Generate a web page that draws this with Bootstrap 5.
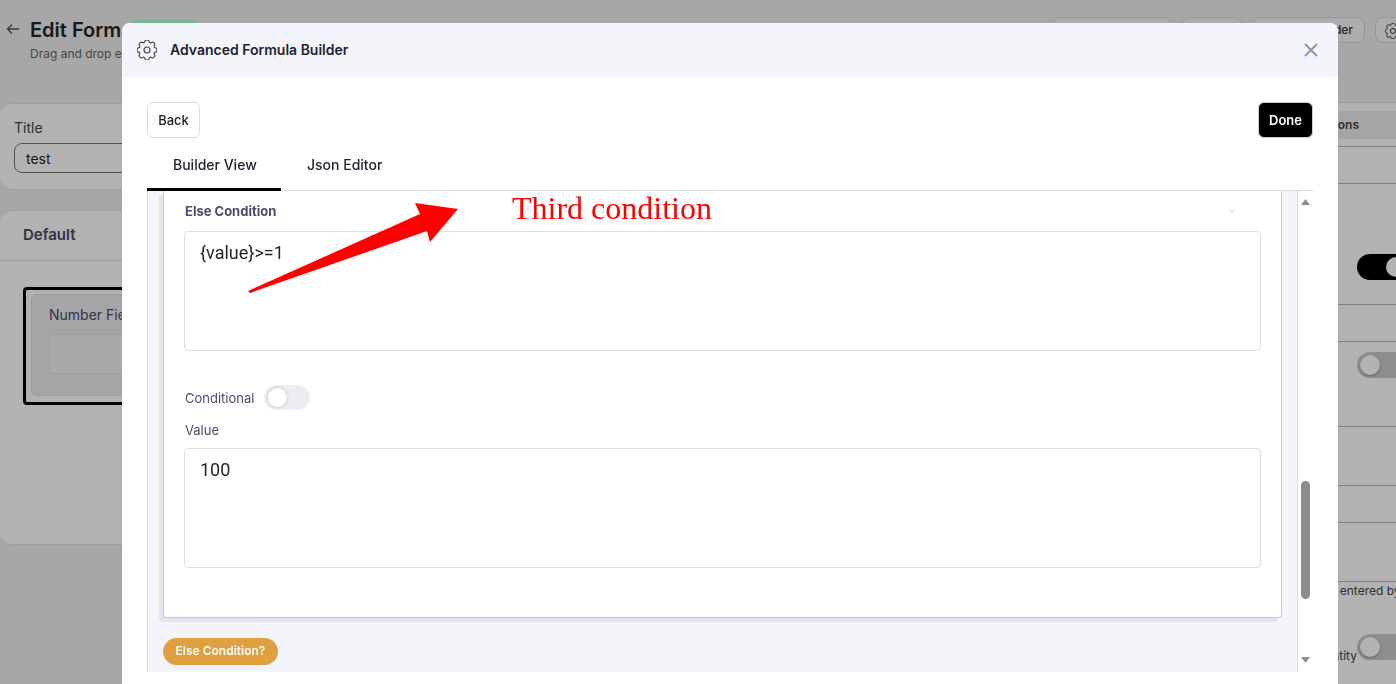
<!DOCTYPE html>
<html lang="en">

<head>
    <meta charset="UTF-8" />
    <meta name="viewport" content="width=device-width, initial-scale=1.0" />
    <title>Edit Form</title>
    <link href="https://cdn.jsdelivr.net/npm/bootstrap@5.3.2/dist/css/bootstrap.min.css" rel="stylesheet" />
    <style>
        html, body {
            height: 684px;
            overflow: hidden;
        }

        body {
            background-color: #f0f0f0;
            font-family: Inter, "Noto Sans", sans-serif;
            color: #212529;
        }

        /* page behind the dialog */
        .page-wrap {
            width: 1420px;
        }

        .page-top {
            height: 102px;
            padding: 17px 9px 0 5px;
        }

        .page-title {
            font-size: 20px;
            line-height: 26px;
            font-weight: 600;
            margin: 0 0 0 1px;
        }

        .page-sub {
            font-size: 12px;
            line-height: 16px;
            color: #666;
            margin: 2px 0 0 25px;
        }

        .status-pill {
            width: 70px;
            height: 24px;
            margin: 3px 0 0 9px;
            border-radius: 8px;
            background-color: #aeffcb;
            font-size: 12px;
            text-align: center;
        }

        .top-actions {
            gap: 10px;
        }

        .top-btn {
            height: 26px;
            border: 1px solid #d6d6d6;
            border-radius: 8px;
            background: #f6f6f6;
            font-size: 12px;
            font-weight: 500;
            line-height: 24px;
            padding: 0 11px;
            text-align: right;
            white-space: nowrap;
            color: #333;
        }

        .btn-w1 { width: 120px; }
        .btn-w2 { width: 60px; }
        .btn-w3 { width: 113px; }
        .btn-w4 { width: 36px; padding: 0 9px; }

        .left-col {
            width: 1120px;
            padding-right: 12px;
        }

        .panel {
            background: #fff;
            border: 1px solid #e4e4e4;
            border-radius: 12px;
            border-left: 0;
        }

        .title-panel {
            height: 87px;
            margin-top: 1px;
            padding: 14px 14px;
        }

        .title-panel label {
            display: block;
            font-size: 14px;
            line-height: 20px;
            margin-bottom: 5px;
            color: #444;
        }

        .title-input {
            height: 30px;
            border: 1px solid #777;
            border-radius: 8px;
            font-size: 14px;
            padding: 0 11px;
        }

        .default-panel {
            height: 335px;
            margin-top: 20px;
        }

        .default-head {
            height: 50px;
            padding-left: 23px;
            line-height: 48px;
            font-size: 15px;
            font-weight: 600;
            color: #4b4b66;
            border-bottom: 1px solid #e4e4e4;
        }

        .drop-zone {
            margin: 26px 12px 0 23px;
            height: 118px;
            border: 3px solid #000;
            border-radius: 4px;
            padding: 4px 5px;
        }

        .field-box {
            height: 102px;
            background: #ececf0;
            border: 1px solid #e0e0e4;
            border-radius: 6px;
            padding: 10px 17px;
        }

        .field-box label {
            font-size: 14px;
            line-height: 20px;
            color: #4b4b66;
            display: block;
            margin-bottom: 9px;
        }

        .field-input {
            height: 40px;
            background: #f3f3f5;
            border: 1px solid #e2e2e6;
            border-radius: 3px;
        }

        .side-col {
            width: 300px;
            background: #fff;
            border-top: 1px solid #d8d8d8;
            height: 582px;
            font-size: 12px;
            color: #444;
        }

        .side-row {
            border-bottom: 1px solid #b4bab8;
            padding-right: 11px;
        }

        .row-a { height: 44px; padding: 8px 0 0; }
        .row-b { height: 37px; }
        .row-c { height: 121px; padding-bottom: 24px; }
        .row-d { height: 85px; padding-top: 10px; }
        .row-e { height: 59px; }

        .side-tab {
            height: 28px;
            line-height: 28px;
            background: #ececec;
            padding-right: 61px;
            font-weight: 600;
            text-align: right;
            color: #444;
        }

        .side-note {
            height: 52px;
            padding: 1px 0 0 185px;
            white-space: nowrap;
            line-height: 16px;
        }

        .qty-row {
            padding-right: 11px;
        }

        .qty-label {
            margin-bottom: -5px;
        }

        .pill-switch {
            width: 52px;
            height: 26px;
            border-radius: 13px;
            background: #ccc;
            padding: 3px;
            flex: none;
        }

        .pill-switch.on {
            background: #000;
        }

        .pill-knob {
            width: 20px;
            height: 20px;
            border-radius: 50%;
            background: #fff;
            box-shadow: 0 1px 3px rgba(0, 0, 0, .35);
        }

        .pill-switch.on .pill-knob {
            margin-left: auto;
        }

        /* dialog */
        .modal-backdrop.shade {
            --bs-backdrop-opacity: .3;
        }

        .dialog-spot {
            position: absolute;
            top: 23px;
            left: 122px;
            width: 1216px;
            z-index: 1060;
        }

        .dialog-spot .modal-content {
            background: #fff;
            border: 0;
            border-radius: 8px 8px 0 0;
        }

        .dialog-spot .modal-header {
            height: 54px;
            padding: 0 20px 0 15px;
            background: #f4f5fa;
            border: 0;
            border-radius: 8px 8px 0 0;
        }

        .dialog-spot .modal-title {
            font-size: 14px;
            font-weight: 600;
            margin: 0 0 1px 13px;
            color: #1f2233;
        }

        .dialog-spot .modal-body {
            padding: 25px 25px 12px;
        }

        .plain-btn {
            height: 36px;
            font-size: 13px;
            font-weight: 500;
            padding: 0 10px;
            border-radius: 6px;
            line-height: 34px;
        }

        .back-btn {
            width: 53px;
            background: #fff;
            border: 1px solid #d9d9d9;
            color: #222;
        }

        .done-btn {
            width: 55px;
            background: #000;
            border: 1px solid #ccc;
            color: #fff;
            font-weight: 600;
        }

        .builder-tabs {
            height: 53px;
            border-bottom: 1px solid #ddd;
            flex-wrap: nowrap;
        }

        .builder-tabs .nav-link {
            height: 53px;
            padding: 16px 26px 0;
            font-size: 14px;
            font-weight: 500;
            line-height: 21px;
            color: #22252f;
            border: 0;
            margin: 0;
            background: transparent;
            white-space: nowrap;
        }

        .builder-tabs .nav-link.active {
            width: 134px;
            border-bottom: 3px solid #000;
            color: #22252f;
        }

        .builder-pane {
            height: 481px;
            margin-top: 0;
        }

        .pane-main {
            width: 1151px;
            background: #f4f5fa;
            border-left: 1px solid #ddd;
            border-right: 1px solid #ddd;
            padding: 0 15px;
        }

        .else-card {
            height: 427px;
            width: 1119px;
            border: 1px solid #c9c9d2;
            border-top: 0;
            border-radius: 0 0 4px 4px;
            box-shadow: -4px 4px 0 #e4e5ec;
            padding: 11px 20px 0;
            position: relative;
            background: #fff;
        }

        .else-label {
            font-size: 13px;
            line-height: 18px;
            font-weight: 700;
            color: #4b4b6b;
            margin: 0 0 11px;
            padding-left: 1px;
        }

        .value-label {
            font-size: 13px;
            line-height: 18px;
            color: #4b4b6b;
            margin: 0;
            padding-left: 1px;
        }

        .value-box {
            height: 120px;
            resize: none;
            padding: 9px 15px;
            font-size: 18px;
            line-height: 24px;
            font-family: Roboto, sans-serif;
            color: #212529;
            border: 1px solid #dddde6;
            border-radius: 4px;
        }

        .cond-row {
            margin-top: 34px;
            height: 25px;
            margin-bottom: 11px;
        }

        .cond-switch {
            width: 46px;
            height: 25px;
            border-radius: 13px;
            background: #ecedf2;
            padding: 3px 4px;
            margin-left: 10px;
        }

        .cond-knob {
            width: 19px;
            height: 19px;
            border-radius: 50%;
            background: #fff;
            box-shadow: 0 0 3px rgba(0, 0, 0, .25);
        }

        .value-gap {
            margin-bottom: 9px;
        }

        .speck {
            position: absolute;
            top: 18px;
            right: 47px;
            width: 4px;
            height: 4px;
            background: #eee;
        }

        .else-btn {
            margin-top: 20px;
            height: 27px;
            width: 115px;
            background: #e0a040;
            color: #fff;
            border: 0;
            border-radius: 14px;
            font-size: 12px;
            font-weight: 600;
            padding: 0 0 2px;
            line-height: 25px;
        }

        .fake-scroll {
            width: 15px;
        }

        .scroll-thumb {
            width: 9px;
            height: 118px;
            border-radius: 5px;
            background: #8c8c8c;
            margin-top: 276px;
        }

        .scroll-up {
            margin-top: 8px;
        }

        .scroll-down {
            margin-top: 58px;
        }

        /* red notes drawn over the screenshot */
        .note-arrow {
            position: absolute;
            top: 0;
            left: 0;
            z-index: 1070;
        }

        .note-text {
            position: absolute;
            top: 188px;
            left: 512px;
            z-index: 1070;
            color: #f00;
            font-family: "Liberation Serif", serif;
            font-size: 32px;
            line-height: 40px;
            white-space: nowrap;
        }
    </style>
</head>

<body>
    <div class="page-wrap">
        <div class="page-top d-flex justify-content-between">
            <div>
                <div class="d-flex align-items-start">
                    <svg width="16" height="16" viewBox="0 0 16 16" fill="none" stroke="#555" stroke-width="1.3" class="mt-1 me-2">
                        <path d="M14 8H2.500M7 3.500 2.500 8 7 12.500" />
                    </svg>
                    <h1 class="page-title">Edit Form</h1>
                    <span class="status-pill">Active</span>
                </div>
                <p class="page-sub">Drag and drop elements</p>
            </div>
            <div class="d-flex top-actions">
                <div class="top-btn btn-w1">Preview Link</div>
                <div class="top-btn btn-w2">Save</div>
                <div class="top-btn btn-w3">Form Builder</div>
                <div class="top-btn btn-w4">
                    <svg width="16" height="16" viewBox="0 0 16 16" fill="none" stroke="#333" stroke-width="1">
                        <circle cx="8" cy="8" r="2.500" />
                        <path d="M9.800 1.300c-.5-1.800-3.100-1.800-3.600 0l-.1.400a.9.900 0 0 1-1.300.5l-.3-.2c-1.600-.9-3.400.9-2.500 2.500l.2.300a.9.900 0 0 1-.5 1.300l-.4.1c-1.800.5-1.800 3.100 0 3.600l.4.1a.9.900 0 0 1 .5 1.300l-.2.300c-.9 1.600.9 3.400 2.500 2.500l.3-.2a.9.900 0 0 1 1.300.5l.1.400c.5 1.800 3.100 1.800 3.600 0l.1-.4a.9.900 0 0 1 1.300-.5l.3.200c1.600.9 3.400-.9 2.500-2.500l-.2-.3a.9.900 0 0 1 .5-1.300l.4-.1c1.800-.5 1.800-3.100 0-3.600l-.4-.1a.9.900 0 0 1-.5-1.300l.2-.3c.9-1.600-.9-3.400-2.500-2.500l-.3.200a.9.900 0 0 1-1.300-.5z" />
                    </svg>
                </div>
            </div>
        </div>

        <div class="d-flex">
            <div class="left-col">
                <div class="panel title-panel">
                    <label>Title</label>
                    <div class="title-input d-flex align-items-center">test</div>
                </div>
                <div class="panel default-panel">
                    <div class="default-head">Default</div>
                    <div class="drop-zone">
                        <div class="field-box">
                            <label>Number Field</label>
                            <div class="field-input"></div>
                        </div>
                    </div>
                </div>
            </div>
            <div class="side-col">
                <div class="side-row row-a">
                    <div class="side-tab">Options</div>
                </div>
                <div class="side-row row-b"></div>
                <div class="side-row row-c d-flex justify-content-end align-items-end">
                    <div class="pill-switch on">
                        <div class="pill-knob"></div>
                    </div>
                </div>
                <div class="side-row row-b"></div>
                <div class="side-row row-d d-flex justify-content-end align-items-start">
                    <div class="pill-switch">
                        <div class="pill-knob"></div>
                    </div>
                </div>
                <div class="side-row row-e"></div>
                <div class="side-row row-b"></div>
                <div class="side-row row-e"></div>
                <div class="side-note">Value entered by the user</div>
                <div class="qty-row d-flex justify-content-end align-items-end">
                    <span class="qty-label">Quantity</span>
                    <div class="pill-switch">
                        <div class="pill-knob"></div>
                    </div>
                </div>
            </div>
        </div>
    </div>

    <div class="modal-backdrop shade show"></div>

    <div class="dialog-spot">
        <div class="modal-content">
            <div class="modal-header d-flex align-items-center">
                <svg width="20" height="20" viewBox="0 0 16 16" fill="none" stroke="#444" stroke-width=".9">
                    <circle cx="8" cy="8" r="2.400" />
                    <path d="M9.800 1.300c-.5-1.800-3.100-1.800-3.600 0l-.1.400a.9.900 0 0 1-1.300.5l-.3-.2c-1.600-.9-3.400.9-2.500 2.500l.2.300a.9.900 0 0 1-.5 1.300l-.4.1c-1.800.5-1.800 3.100 0 3.600l.4.1a.9.900 0 0 1 .5 1.300l-.2.300c-.9 1.600.9 3.400 2.500 2.500l.3-.2a.9.900 0 0 1 1.300.5l.1.400c.5 1.800 3.100 1.800 3.600 0l.1-.4a.9.900 0 0 1 1.300-.5l.3.200c1.600.9 3.400-.9 2.500-2.500l-.2-.3a.9.900 0 0 1 .5-1.300l.4-.1c1.800-.5 1.800-3.100 0-3.600l-.4-.1a.9.900 0 0 1-.5-1.300l.2-.3c.9-1.600-.9-3.400-2.500-2.500l-.3.200a.9.900 0 0 1-1.300-.5z" />
                </svg>
                <h5 class="modal-title">Advanced Formula Builder</h5>
                <svg class="ms-auto" width="14" height="14" viewBox="0 0 14 14" stroke="#8c95b5" stroke-width="2" fill="none">
                    <path d="M1 1l12 12M13 1 1 13" />
                </svg>
            </div>
            <div class="modal-body">
                <div class="d-flex justify-content-between">
                    <button class="btn plain-btn back-btn">Back</button>
                    <button class="btn plain-btn done-btn">Done</button>
                </div>
                <ul class="nav nav-tabs builder-tabs">
                    <li class="nav-item"><a class="nav-link active" href="#">Builder View</a></li>
                    <li class="nav-item"><a class="nav-link" href="#">Json Editor</a></li>
                </ul>
                <div class="builder-pane d-flex">
                    <div class="pane-main">
                        <div class="else-card">
                            <span class="speck"></span>
                            <p class="else-label">Else Condition</p>
                            <textarea class="form-control value-box">{value}&gt;=1</textarea>
                            <div class="cond-row d-flex align-items-center">
                                <span class="value-label">Conditional</span>
                                <div class="cond-switch">
                                    <div class="cond-knob"></div>
                                </div>
                            </div>
                            <p class="value-label value-gap">Value</p>
                            <textarea class="form-control value-box">100</textarea>
                        </div>
                        <button class="btn else-btn">Else Condition?</button>
                    </div>
                    <div class="fake-scroll d-flex flex-column align-items-center">
                        <svg class="scroll-up" width="9" height="6" viewBox="0 0 9 6" fill="#8c8c8c"><path d="M4.500 0 9 6H0z" /></svg>
                        <div class="scroll-thumb"></div>
                        <svg class="scroll-down" width="9" height="6" viewBox="0 0 9 6" fill="#8c8c8c"><path d="M0 0h9L4.500 6z" /></svg>
                    </div>
                </div>
            </div>
        </div>
    </div>

    <svg class="note-arrow" width="1396" height="684" viewBox="0 0 1396 684" fill="#f00">
        <path d="M248 291 420 214 415 203 458 209 430 242 427 231 250 293z" />
    </svg>
    <div class="note-text">Third condition</div>

    <script src="https://cdn.jsdelivr.net/npm/bootstrap@5.3.2/dist/js/bootstrap.bundle.min.js"></script>
</body>

</html>
